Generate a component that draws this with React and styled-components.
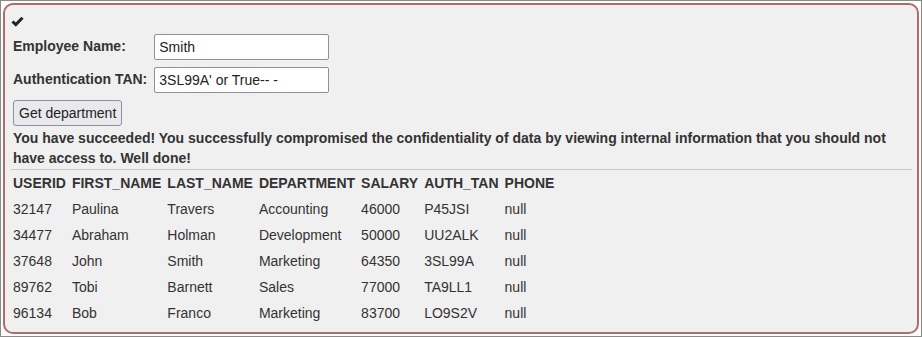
import React from "react";
import styled, { createGlobalStyle } from "styled-components";

const Global = createGlobalStyle`
  html, body { margin: 0; padding: 0; background: #fff; }
  body { font-family: "Liberation Sans", Arial, sans-serif; }
`;

const Frame = styled.div`
  box-sizing: border-box;
  width: 922px;
  height: 337px;
  border: 1px solid #8a8a8a;
  padding: 2px;
  background: #fff;
`;

const Panel = styled.div`
  box-sizing: border-box;
  height: 331px;
  border: 2px solid #b26a6a;
  border-radius: 10px;
  background: #f0f0f0;
  padding: 0 5px 5px 8px;
  color: #333;
  font-size: 14px;
`;

const CheckRow = styled.div`
  height: 29px;
  padding-top: 9px;
  box-sizing: border-box;
  margin-left: -2px;
`;

const FormGrid = styled.div`
  display: grid;
  grid-template-columns: auto 175px;
  justify-content: start;
  column-gap: 7px;
  row-gap: 7px;
  align-items: center;
`;

const Label = styled.label`
  font-weight: bold;
  font-size: 14px;
  color: #333;
  white-space: nowrap;
  padding-bottom: 2px;
`;

const TextInput = styled.input`
  box-sizing: border-box;
  width: 175px;
  height: 26px;
  border: 1px solid #8f8f9d;
  border-radius: 2px;
  background: #fff;
  padding: 0 4px;
  font-family: "Liberation Sans", Arial, sans-serif;
  font-size: 14px;
  color: #222;
  outline: none;
`;

const Button = styled.button`
  box-sizing: border-box;
  margin-top: 7px;
  height: 26px;
  padding: 0 5px;
  border: 1px solid #8f8f9d;
  border-radius: 3px;
  background: #e9e9ed;
  font-family: "Liberation Sans", Arial, sans-serif;
  font-size: 14px;
  color: #222;
  display: block;
`;

const Feedback = styled.p`
  margin: 2px 0 0 0;
  font-weight: bold;
  line-height: 20px;
  color: #333;
`;

const Rule = styled.div`
  margin: 1px 0 0 -2px;
  height: 1px;
  background: #c8c8c8;
`;

const Table = styled.table`
  border-collapse: separate;
  border-spacing: 2px;
  margin: -1px 0 0 -4px;
  font-size: 14px;
  color: #333;
`;

const Th = styled.th`
  text-align: left;
  font-weight: bold;
  padding: 2px;
  line-height: 20px;
  white-space: nowrap;
`;

const Td = styled.td`
  text-align: left;
  padding: 2px;
  line-height: 20px;
  white-space: nowrap;
`;

const Check = () => (
  <svg width="13" height="11" viewBox="0 0 13 11">
    <polyline
      points="1.5,5.5 4.8,8.6 11.5,1.8"
      fill="none"
      stroke="#222"
      strokeWidth="3"
      strokeLinecap="butt"
      strokeLinejoin="miter"
    />
  </svg>
);

const headers = ["USERID", "FIRST_NAME", "LAST_NAME", "DEPARTMENT", "SALARY", "AUTH_TAN", "PHONE"];
const rows = [
  ["32147", "Paulina", "Travers", "Accounting", "46000", "P45JSI", "null"],
  ["34477", "Abraham", "Holman", "Development", "50000", "UU2ALK", "null"],
  ["37648", "John", "Smith", "Marketing", "64350", "3SL99A", "null"],
  ["89762", "Tobi", "Barnett", "Sales", "77000", "TA9LL1", "null"],
  ["96134", "Bob", "Franco", "Marketing", "83700", "LO9S2V", "null"],
];

export default function App() {
  return (
    <>
      <Global />
      <Frame>
        <Panel>
          <CheckRow>
            <Check />
          </CheckRow>
          <FormGrid>
            <Label>Employee Name:</Label>
            <TextInput defaultValue="Smith" />
            <Label>Authentication TAN:</Label>
            <TextInput defaultValue="3SL99A' or True-- -" />
          </FormGrid>
          <Button>Get department</Button>
          <Feedback>
            You have succeeded! You successfully compromised the confidentiality of data by viewing internal information that you should not have access to. Well done!
          </Feedback>
          <Rule />
          <Table>
            <thead>
              <tr>
                {headers.map((h) => (
                  <Th key={h}>{h}</Th>
                ))}
              </tr>
            </thead>
            <tbody>
              {rows.map((r) => (
                <tr key={r[0]}>
                  {r.map((c, i) => (
                    <Td key={i}>{c}</Td>
                  ))}
                </tr>
              ))}
            </tbody>
          </Table>
        </Panel>
      </Frame>
    </>
  );
}
